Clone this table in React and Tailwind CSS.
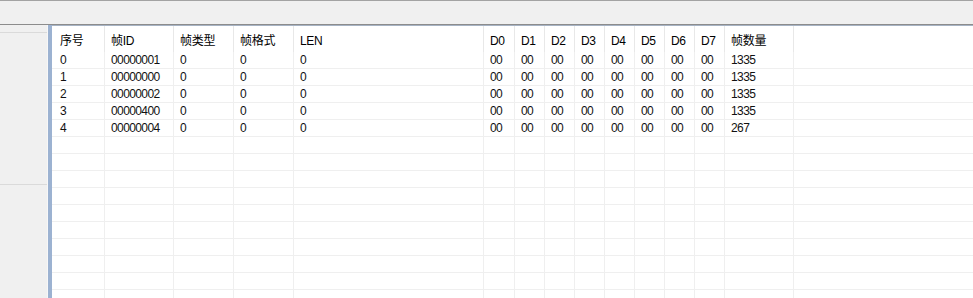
import React from 'react';

// column layout of the CAN frame list: label + pixel width (border included)
const COLUMNS = [
  { key: 'idx', label: '序号', w: 'w-[53px]', pad: 'pl-[8px]' },
  { key: 'id', label: '帧ID', w: 'w-[69px]', pad: 'pl-[6px]' },
  { key: 'type', label: '帧类型', w: 'w-[60px]', pad: 'pl-[6px]' },
  { key: 'fmt', label: '帧格式', w: 'w-[60px]', pad: 'pl-[6px]' },
  { key: 'len', label: 'LEN', w: 'w-[190px]', pad: 'pl-[6px]' },
  { key: 'd0', label: 'D0', w: 'w-[31px]', pad: 'pl-[6px]' },
  { key: 'd1', label: 'D1', w: 'w-[30px]', pad: 'pl-[6px]' },
  { key: 'd2', label: 'D2', w: 'w-[30px]', pad: 'pl-[6px]' },
  { key: 'd3', label: 'D3', w: 'w-[30px]', pad: 'pl-[6px]' },
  { key: 'd4', label: 'D4', w: 'w-[30px]', pad: 'pl-[6px]' },
  { key: 'd5', label: 'D5', w: 'w-[30px]', pad: 'pl-[6px]' },
  { key: 'd6', label: 'D6', w: 'w-[30px]', pad: 'pl-[6px]' },
  { key: 'd7', label: 'D7', w: 'w-[30px]', pad: 'pl-[6px]' },
  { key: 'count', label: '帧数量', w: 'w-[69px]', pad: 'pl-[6px]' },
];

const frame = (idx, id, count) => ({
  idx, id, type: '0', fmt: '0', len: '0',
  d0: '00', d1: '00', d2: '00', d3: '00', d4: '00', d5: '00', d6: '00', d7: '00',
  count,
});

const FRAMES = [
  frame('0', '00000001', '1335'),
  frame('1', '00000000', '1335'),
  frame('2', '00000002', '1335'),
  frame('3', '00000400', '1335'),
  frame('4', '00000004', '267'),
];

const TOTAL_ROWS = 15;

const font = { fontFamily: '"Liberation Sans", "Noto Sans CJK SC", sans-serif' };

function HeaderRow() {
  return (
    <div className="flex h-[26px] shrink-0">
      {COLUMNS.map((c) => (
        <div
          key={c.key}
          className={`${c.w} ${c.pad} shrink-0 flex items-center pt-[3px] border-r border-[#e8e8e8] text-[12px] text-black tracking-[-0.3px] whitespace-nowrap`}
        >
          {c.label}
        </div>
      ))}
      <div className="flex-1" />
    </div>
  );
}

function DataRow({ row }) {
  return (
    <div className="flex h-[17px] shrink-0 border-b border-[#efefef]">
      {COLUMNS.map((c) => (
        <div
          key={c.key}
          className={`${c.w} ${c.pad} shrink-0 flex items-center border-r border-[#efefef] text-[12px] text-[#111] tracking-[-0.6px] whitespace-nowrap`}
        >
          {row ? row[c.key] : ''}
        </div>
      ))}
      <div className="flex-1" />
    </div>
  );
}

export default function App() {
  const rows = Array.from({ length: TOTAL_ROWS }, (_, i) => FRAMES[i] || null);

  return (
    <div className="w-[973px] h-[298px] overflow-hidden bg-[#f0f0f0] flex flex-col" style={font}>
      {/* toolbar strip */}
      <div className="h-[24px] shrink-0 border-t border-[#a3a3a3] bg-[#f0f0f0]" />
      <div className="h-px shrink-0 bg-[#8c8c8c]" />

      <div className="flex flex-1 min-h-0">
        {/* left tree panel, clipped */}
        <div className="w-[48px] shrink-0 bg-[#f0f0f0] border-r border-[#f7f7f7]">
          <div className="mt-[7px] h-[153px] border-t border-b border-[#dadada]" />
        </div>
        {/* splitter */}
        <div className="w-[4px] shrink-0 bg-[#9cb2d1]" />

        {/* frame grid */}
        <div className="flex-1 min-w-0 bg-white border-t border-[#a6b3c4] flex flex-col overflow-hidden">
          <HeaderRow />
          {rows.map((r, i) => (
            <DataRow key={i} row={r} />
          ))}
        </div>
      </div>
    </div>
  );
}
